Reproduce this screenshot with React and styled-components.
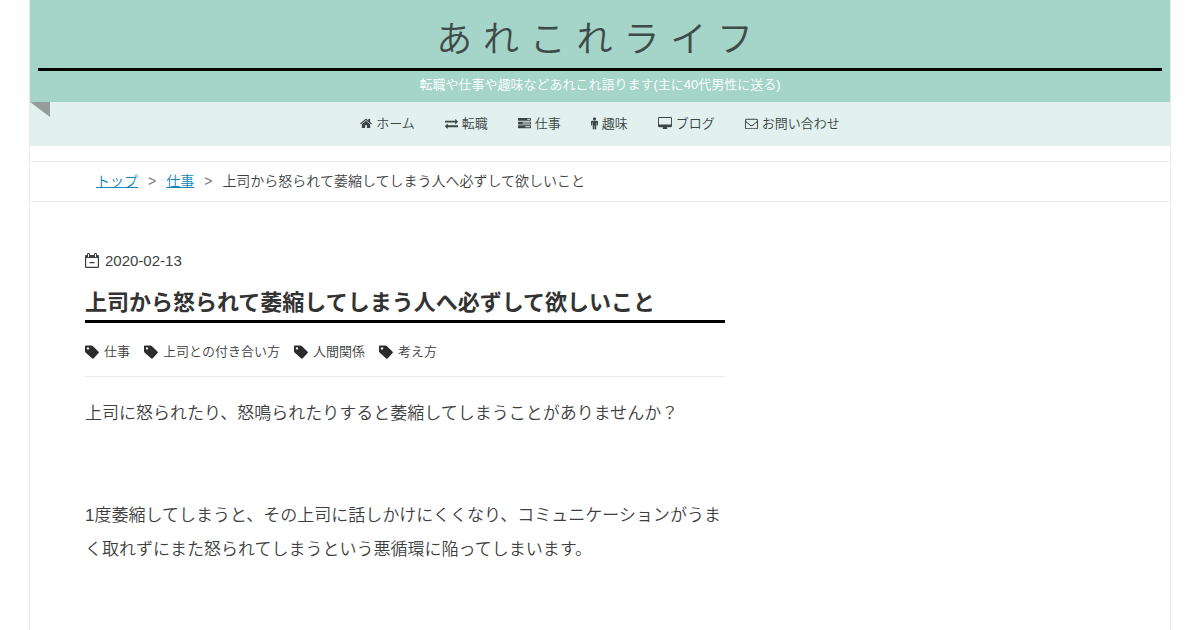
import React from "react";
import styled, { createGlobalStyle } from "styled-components";

const GlobalStyle = createGlobalStyle`
  * {
    box-sizing: border-box;
  }
  body {
    margin: 0;
    background: #fff;
    color: #3d3f3f;
    font-family: "Liberation Sans", "Noto Sans CJK JP", sans-serif;
    font-size: 17px;
    font-weight: 350;
  }
`;
const Container = styled.div`
  max-width: 1142px;
  min-height: 100vh;
  margin: 0 auto;
  border: solid #ebebeb;
  border-width: 0 1px;
`;
const Header = styled.header`
  padding: 8px 8px 0;
  background: #a5d4c9;
  text-align: center;
`;
const SiteTitle = styled.h1`
  margin: 0;
  padding-top: 4px;
  border-bottom: 3px solid #000;
  font-size: 36px;
  font-weight: 350;
  line-height: 56px;
  letter-spacing: 0.3em;
`;
const SiteLink = styled.a`
  color: #3f4b48;
  text-decoration: none;
`;
const Description = styled.p`
  margin: 0;
  padding: 2px 0 5px;
  color: #fff;
  font-size: 13px;
  line-height: 24px;
`;
const Nav = styled.nav`
  position: relative;
  background: #e2f1ee;
  &::before {
    content: "";
    position: absolute;
    top: 0;
    left: 0;
    border-top: 15px solid #949d9a;
    border-left: 20px solid transparent;
  }
`;
const NavList = styled.ul`
  display: flex;
  justify-content: center;
  gap: 30px;
  margin: 0;
  padding: 0;
  list-style: none;
`;
const NavLink = styled.a`
  display: flex;
  align-items: center;
  gap: 4px;
  color: #3b4644;
  font-size: 13px;
  line-height: 44px;
  text-decoration: none;
  svg {
    margin-bottom: 2px;
  }
`;
const Icon = styled.svg`
  display: block;
  flex: none;
  width: ${(props) => props.$width}px;
  height: ${(props) => props.$height}px;
  fill: currentColor;
`;
const Breadcrumb = styled.nav`
  display: flex;
  gap: 10px;
  margin-top: 15px;
  padding: 0 66px;
  border: solid #ebebeb;
  border-width: 1px 0;
  font-size: 14px;
  line-height: 39px;
`;
const BreadcrumbLink = styled.a`
  color: #1487b8;
`;
const Separator = styled.span`
  color: #777;
`;
const Article = styled.article`
  max-width: 695px;
  margin-top: 47px;
  padding-left: 55px;
`;
const EntryDate = styled.div`
  display: flex;
  align-items: center;
  gap: 6px;
  font-size: 15px;
  line-height: 24px;
  svg {
    margin-bottom: 2px;
  }
`;
const EntryTitle = styled.h2`
  margin: 12px 0 0;
  border-bottom: 3px solid #000;
  color: #333;
  font-size: 22px;
  line-height: 35px;
`;
const Tags = styled.ul`
  display: flex;
  gap: 14px;
  margin: 0;
  padding: 16px 0 12px;
  border-bottom: 1px solid #ebebeb;
  list-style: none;
`;
const TagLink = styled.a`
  display: flex;
  align-items: center;
  gap: 5px;
  color: inherit;
  font-size: 13px;
  line-height: 25px;
  text-decoration: none;
  svg {
    color: #2b2b2b;
  }
`;
const Body = styled.div`
  padding-top: 20px;
  p {
    margin: 0 0 68px;
    line-height: 34px;
  }
`;

const menu = [
  {
    label: "ホーム",
    width: 12,
    viewBox: "64 0 1664 1792",
    path: "M1472 992v480q0 26-19 45t-45 19h-384v-384h-256v384h-384q-26 0-45-19t-19-45v-480q0-1 .5-3t.5-3l575-474 575 474q1 2 1 6zm223-69l-62 74q-8 9-21 11h-3q-13 0-21-7l-692-577-692 577q-12 8-24 7-13-2-21-11l-62-74q-8-10-7-23.5t11-21.5l719-599q32-26 76-26t76 26l244 204v-195q0-14 9-23t23-9h192q14 0 23 9t9 23v408l219 182q10 8 11 21.5t-7 23.5z",
  },
  {
    label: "転職",
    width: 13,
    viewBox: "0 0 1792 1792",
    path: "M1792 1184v192q0 13-9.5 22.5t-22.5 9.5h-1376v192q0 13-9.5 22.5t-22.5 9.5q-12 0-24-10l-319-320q-9-9-9-22 0-14 9-23l320-320q9-9 23-9 13 0 22.5 9.5t9.5 22.5v192h1376q13 0 22.5 9.5t9.5 22.5zm0-544q0 14-9 23l-320 320q-9 9-23 9-13 0-22.5-9.5t-9.5-22.5v-192h-1376q-13 0-22.5-9.5t-9.5-22.5v-192q0-13 9.5-22.5t22.5-9.5h1376v-192q0-14 9-23t23-9q12 0 24 10l319 319q9 9 9 23z",
  },
  {
    label: "仕事",
    width: 13,
    viewBox: "0 0 1792 1792",
    path: "M1024 1408h640v-128h-640v128zm-384-512h1024v-128h-1024v128zm640-512h384v-128h-384v128zm512 832v256q0 26-19 45t-45 19h-1664q-26 0-45-19t-19-45v-256q0-26 19-45t45-19h1664q26 0 45 19t19 45zm0-512v256q0 26-19 45t-45 19h-1664q-26 0-45-19t-19-45v-256q0-26 19-45t45-19h1664q26 0 45 19t19 45zm0-512v256q0 26-19 45t-45 19h-1664q-26 0-45-19t-19-45v-256q0-26 19-45t45-19h1664q26 0 45 19t19 45z",
  },
  {
    label: "趣味",
    width: 7,
    viewBox: "384 0 1024 1792",
    path: "M1408 672v416q0 40-28 68t-68 28-68-28-28-68v-352h-64v912q0 46-33 79t-79 33-79-33-33-79v-464h-64v464q0 46-33 79t-79 33-79-33-33-79v-912h-64v352q0 40-28 68t-68 28-68-28-28-68v-416q0-80 56-136t136-56h640q80 0 136 56t56 136zm-288-448q0 93-65.5 158.5t-158.5 65.5-158.5-65.5-65.5-158.5 65.5-158.5 158.5-65.5 158.5 65.5 65.5 158.5z",
  },
  {
    label: "ブログ",
    width: 14,
    viewBox: "-64 0 1920 1792",
    path: "M1728 992v-832q0-13-9.5-22.5t-22.5-9.5h-1600q-13 0-22.5 9.5t-9.5 22.5v832q0 13 9.5 22.5t22.5 9.5h1600q13 0 22.5-9.5t9.5-22.5zm128-832v1088q0 66-47 113t-113 47h-544q0 37 16 77.5t32 71 16 43.5q0 26-19 45t-45 19h-512q-26 0-45-19t-19-45q0-14 16-44t32-70 16-78h-544q-66 0-113-47t-47-113v-1088q0-66 47-113t113-47h1600q66 0 113 47t47 113z",
  },
  {
    label: "お問い合わせ",
    width: 13,
    viewBox: "0 0 1792 1792",
    path: "M1664 1504v-768q-32 36-69 66-268 206-426 338-51 43-83 67t-86.5 48.5-102.5 24.5h-2q-48 0-102.5-24.5t-86.5-48.5-83-67q-158-132-426-338-37-30-69-66v768q0 13 9.5 22.5t22.5 9.5h1472q13 0 22.5-9.5t9.5-22.5zm0-1051v-24.5l-.5-13-3-12.5-5.5-9-9-7.5-14-2.5h-1472q-13 0-22.5 9.5t-9.5 22.5q0 168 147 284 193 152 401 317 6 5 35 29.5t46 37.5 44.5 31.5 50.5 27.5 43 9h2q20 0 43-9t50.5-27.5 44.5-31.5 46-37.5 35-29.5q208-165 401-317 54-43 100.5-115.5t46.5-131.5zm128-37v1088q0 66-47 113t-113 47h-1472q-66 0-113-47t-47-113v-1088q0-66 47-113t113-47h1472q66 0 113 47t47 113z",
  },
];
const tags = ["仕事", "上司との付き合い方", "人間関係", "考え方"];

const App = () => {
  return (
    <>
      <GlobalStyle />
      <Container>
        <Header>
          <SiteTitle>
            <SiteLink href="#">あれこれライフ</SiteLink>
          </SiteTitle>
          <Description>
            転職や仕事や趣味などあれこれ語ります(主に40代男性に送る)
          </Description>
        </Header>
        <Nav>
          <NavList>
            {menu.map((item) => (
              <li key={item.label}>
                <NavLink href="#">
                  <Icon
                    $width={item.width}
                    $height={13}
                    viewBox={item.viewBox}
                    aria-hidden="true"
                  >
                    <path d={item.path} />
                  </Icon>
                  {item.label}
                </NavLink>
              </li>
            ))}
          </NavList>
        </Nav>
        <Breadcrumb>
          <BreadcrumbLink href="#">トップ</BreadcrumbLink>
          <Separator>&gt;</Separator>
          <BreadcrumbLink href="#">仕事</BreadcrumbLink>
          <Separator>&gt;</Separator>
          <span>上司から怒られて萎縮してしまう人へ必ずして欲しいこと</span>
        </Breadcrumb>
        <Article>
          <EntryDate>
            <Icon $width={14} $height={15} viewBox="0 0 14 15" aria-hidden="true">
              <path
                fillRule="evenodd"
                d="M0 3q0-1 1-1h1v2h3V2h4v2h3V2h1q1 0 1 1v11q0 1-1 1H1q-1 0-1-1zM1.200 5v8.800h11.600V5z"
              />
              <path d="M2 1q0-1 1.500-1T5 1v3H4V1H3v3H2zM9 1q0-1 1.500-1T12 1v3h-1V1h-1v3H9zM4.500 9h5v1.200h-5z" />
            </Icon>
            <time dateTime="2020-02-13">2020-02-13</time>
          </EntryDate>
          <EntryTitle>
            上司から怒られて萎縮してしまう人へ必ずして欲しいこと
          </EntryTitle>
          <Tags>
            {tags.map((tag) => (
              <li key={tag}>
                <TagLink href="#">
                  <Icon
                    $width={14}
                    $height={14}
                    viewBox="0 0 14 14"
                    aria-hidden="true"
                  >
                    <path
                      fillRule="evenodd"
                      d="M0 1.500Q0 .5 1 .5h5q1 0 1.700.6l5.700 5.400q.9.900 0 1.800l-4.600 4.900q-.9.900-1.800 0L.8 7.800Q0 7 0 6zM3 2.200a1.200 1.200 0 1 0 .01 0z"
                    />
                  </Icon>
                  {tag}
                </TagLink>
              </li>
            ))}
          </Tags>
          <Body>
            <p>
              上司に怒られたり、怒鳴られたりすると萎縮してしまうことがありませんか？
            </p>
            <p>
              1度萎縮してしまうと、その上司に話しかけにくくなり、コミュニケーションがうまく取れずにまた怒られてしまうという悪循環に陥ってしまいます。
            </p>
          </Body>
        </Article>
      </Container>
    </>
  );
};

export default App;
